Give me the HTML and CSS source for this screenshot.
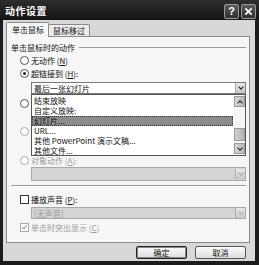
FILE: index.html
```html
<!DOCTYPE html>
<html lang="zh-CN">
  <head>
    <meta charset="UTF-8" />
    <title>动作设置</title>
    <link rel="stylesheet" href="styles.css">
  </head>
  <body>
    <div class="window">
      <div class="titlebar">
        <span class="title">动作设置</span>
        <div class="caption-buttons">
          <span class="caption-btn">?</span>
          <span class="caption-btn">
            <svg viewBox="0 0 10 10" width="9" height="9">
              <path d="M1.5 1.5 L8.5 8.5 M8.5 1.5 L1.5 8.5" stroke="#fff" stroke-width="1.8" />
            </svg>
          </span>
        </div>
      </div>

      <div class="client">
        <div class="tabs">
          <div class="tab active">单击鼠标</div>
          <div class="tab">鼠标移过</div>
        </div>

        <div class="page">
          <div class="legend">
            <span>单击鼠标时的动作</span>
            <span class="rule"></span>
          </div>

          <div class="option opt-none">
            <span class="radio"></span>
            <span>无动作 (<u>N</u>)</span>
          </div>
          <div class="option opt-link">
            <span class="radio checked"></span>
            <span>超链接到 (<u>H</u>):</span>
          </div>
          <div class="combo combo-link">
            <span class="combo-text">最后一张幻灯片</span>
            <span class="combo-arrow"></span>
          </div>

          <!-- these two rows sit under the open list -->
          <div class="option opt-run">
            <span class="radio"></span>
          </div>
          <div class="combo combo-hidden"></div>
          <div class="option opt-macro disabled">
            <span class="radio"></span>
          </div>
          <div class="combo combo-hidden"></div>

          <div class="option opt-object disabled">
            <span class="radio"></span>
            <span>对象动作 (<u>A</u>):</span>
          </div>
          <div class="combo combo-object disabled">
            <span class="combo-text"></span>
            <span class="combo-arrow"></span>
          </div>

          <div class="separator"></div>

          <div class="option opt-sound">
            <span class="checkbox"></span>
            <span>播放声音 (<u>P</u>):</span>
          </div>
          <div class="combo combo-sound disabled">
            <span class="combo-text">[无声音]</span>
            <span class="combo-arrow"></span>
          </div>
          <div class="option opt-highlight disabled">
            <span class="checkbox checked"></span>
            <span>单击时突出显示 (<u>C</u>)</span>
          </div>

          <!-- open dropdown of the hyperlink combo -->
          <div class="dropdown">
            <div class="dropdown-items">
              <div class="item">结束放映</div>
              <div class="item">自定义放映:</div>
              <div class="item selected">幻灯片...</div>
              <div class="item">URL...</div>
              <div class="item">其他 PowerPoint 演示文稿...</div>
              <div class="item">其他文件...</div>
            </div>
            <div class="scrollbar">
              <span class="scroll-btn up"></span>
              <span class="scroll-track">
                <span class="scroll-thumb"></span>
              </span>
              <span class="scroll-btn down"></span>
            </div>
          </div>
        </div>

        <div class="footer">
          <div class="button default">确定</div>
          <div class="button">取消</div>
        </div>
      </div>
    </div>
  </body>
</html>
```

FILE: styles.css
```css
body {
  margin: 0;
  font-family: "Noto Sans CJK SC", "Noto Sans", sans-serif;
  font-size: 8px;
  color: #111;
  background: #1a1a1a;
}

.window {
  width: 259px;
  height: 265px;
  background: #1c1c1c;
  display: flex;
  flex-direction: column;
}

.titlebar {
  height: 20px;
  display: flex;
  align-items: center;
  justify-content: space-between;
  padding: 0 3px 0 5px;
  background: linear-gradient(#2e2e2e, #141414);
  color: #fff;
}

.title {
  font-size: 10px;
  font-weight: bold;
  letter-spacing: 0.5px;
}

.caption-buttons {
  display: flex;
  gap: 2px;
  margin-top: 2px;
}

.caption-btn {
  width: 13px;
  height: 13px;
  border: 1px solid #9a9a9a;
  border-radius: 2px;
  background: linear-gradient(#5a5a5a, #303030);
  display: flex;
  justify-content: center;
  align-items: center;
  font-family: "Liberation Sans", sans-serif;
  font-size: 11px;
  font-weight: bold;
  line-height: 1;
}

.client {
  flex: 1;
  margin: 0 4px 4px 3px;
  padding: 2px 5px 0 3px;
  background: #d8d8d8;
  display: flex;
  flex-direction: column;
}

.tabs {
  display: flex;
  align-items: flex-end;
  height: 14px;
  position: relative;
  z-index: 1;
}

.tab {
  height: 11px;
  padding: 0 4px;
  line-height: 11px;
  border: 1px solid #8a8a8a;
  border-bottom: none;
  border-radius: 2px 2px 0 0;
  background: #ececec;
  margin-left: -1px;
}

.tab.active {
  height: 14px;
  line-height: 14px;
  padding: 0 4px 0 5px;
  margin-left: 0;
  background: #f6f6f6;
  margin-bottom: -1px;
}

.page {
  height: 205px;
  border: 1px solid #8a8a8a;
  background: #f6f6f6;
  position: relative;
  display: flex;
  flex-direction: column;
}

.legend {
  display: flex;
  align-items: center;
  height: 11px;
  margin: 5px 3px 0 4px;
}

.rule {
  flex: 1;
  height: 1px;
  background: #9a9a9a;
  margin-left: 4px;
}

.option {
  display: flex;
  align-items: center;
  gap: 2px;
  height: 11px;
  margin-left: 13px;
}

.option.disabled {
  color: #9a9a9a;
}

.opt-none {
  margin-top: 2px;
}

.opt-link {
  margin-top: 2px;
}

.opt-run {
  margin-top: 4px;
}

.opt-macro {
  margin-top: 3px;
}

.opt-object {
  margin-top: 4px;
}

.opt-highlight {
  margin-top: 3px;
}

.radio {
  width: 7px;
  height: 7px;
  border: 1px solid #555;
  border-radius: 50%;
  background: #fff;
  position: relative;
}

.option.disabled .radio {
  border-color: #aaa;
}

.radio.checked::after {
  content: "";
  position: absolute;
  left: 2px;
  top: 2px;
  width: 3px;
  height: 3px;
  border-radius: 50%;
  background: #222;
}

.checkbox {
  width: 7px;
  height: 7px;
  border: 1px solid #333;
  background: #fff;
  position: relative;
}

.option.disabled .checkbox {
  border-color: #aaa;
}

.checkbox.checked::after {
  content: "";
  position: absolute;
  left: 2px;
  top: 0;
  width: 2px;
  height: 4px;
  border: solid #999;
  border-width: 0 1px 1px 0;
  transform: rotate(40deg);
}

.combo {
  display: flex;
  align-items: center;
  justify-content: space-between;
  height: 12px;
  margin: 0 3px 0 24px;
  border: 1px solid #7a7a7a;
  background: #fff;
  box-sizing: border-box;
}

.combo-link {
  margin-top: 3px;
}

.combo-hidden {
  margin-top: 2px;
}

.combo-object {
  height: 14px;
  margin-top: 1px;
}

.combo-sound {
  margin-top: 2px;
}

.combo.disabled {
  background: #d4d4d4;
  border-color: #a8a8a8;
  color: #999;
}

.combo-text {
  padding-left: 2px;
}

.combo-arrow {
  width: 10px;
  height: 10px;
  background: linear-gradient(#e8e8e8, #c8c8c8);
  border-left: 1px solid #aaa;
  box-sizing: border-box;
  display: flex;
  justify-content: center;
  align-items: center;
}

.combo-arrow::before {
  content: "";
  width: 3px;
  height: 3px;
  border: solid #222;
  border-width: 0 1.5px 1.5px 0;
  transform: translateY(-1px) rotate(45deg);
}

.combo.disabled .combo-arrow::before {
  border-color: #aaa;
}

.separator {
  height: 1px;
  margin: 4px 3px 0 4px;
  background: #9a9a9a;
  border-bottom: 1px solid #fff;
}

.opt-sound {
  margin-top: 7px;
}

/* open list of the hyperlink combo, lies over the other options */
.dropdown {
  position: absolute;
  left: 24px;
  top: 57px;
  width: 215px;
  height: 62px;
  box-sizing: border-box;
  border: 1px solid #555;
  background: #fff;
  display: flex;
}

.dropdown-items {
  flex: 1;
  padding-top: 1px;
}

.item {
  height: 10px;
  line-height: 10px;
  padding-left: 2px;
  margin-right: 1px;
  white-space: nowrap;
  overflow: hidden;
}

.item.selected {
  background: #8c8c8c;
  color: #111;
  outline: 1px dotted #333;
  outline-offset: -1px;
}

.scrollbar {
  width: 11px;
  display: flex;
  flex-direction: column;
  padding: 1px 0;
}

.scroll-btn {
  height: 11px;
  background: linear-gradient(90deg, #d8d8d8, #b8b8b8);
  border: 1px solid #999;
  box-sizing: border-box;
  display: flex;
  justify-content: center;
  align-items: center;
}

.scroll-btn::before {
  content: "";
  width: 3px;
  height: 3px;
  border: solid #222;
  border-width: 0 1.5px 1.5px 0;
}

.scroll-btn.up::before {
  transform: translateY(1px) rotate(-135deg);
}

.scroll-btn.down::before {
  transform: translateY(-1px) rotate(45deg);
}

.scroll-track {
  flex: 1;
  background: #f6f6f6;
  display: flex;
  flex-direction: column;
  justify-content: flex-end;
  padding-bottom: 2px;
}

.scroll-thumb {
  height: 13px;
  background: linear-gradient(90deg, #d0d0d0, #b4b4b4);
  border: 1px solid #999;
  box-sizing: border-box;
}

.footer {
  display: flex;
  justify-content: flex-end;
  gap: 8px;
  padding: 3px 4px 0 0;
}

.button {
  width: 51px;
  height: 13px;
  box-sizing: border-box;
  border: 1px solid #555;
  border-radius: 2px;
  background: linear-gradient(#fafafa, #dedede);
  text-align: center;
  line-height: 11px;
}

.button.default {
  border: 1px solid #222;
  box-shadow: inset 0 0 0 1px #888;
}
```
